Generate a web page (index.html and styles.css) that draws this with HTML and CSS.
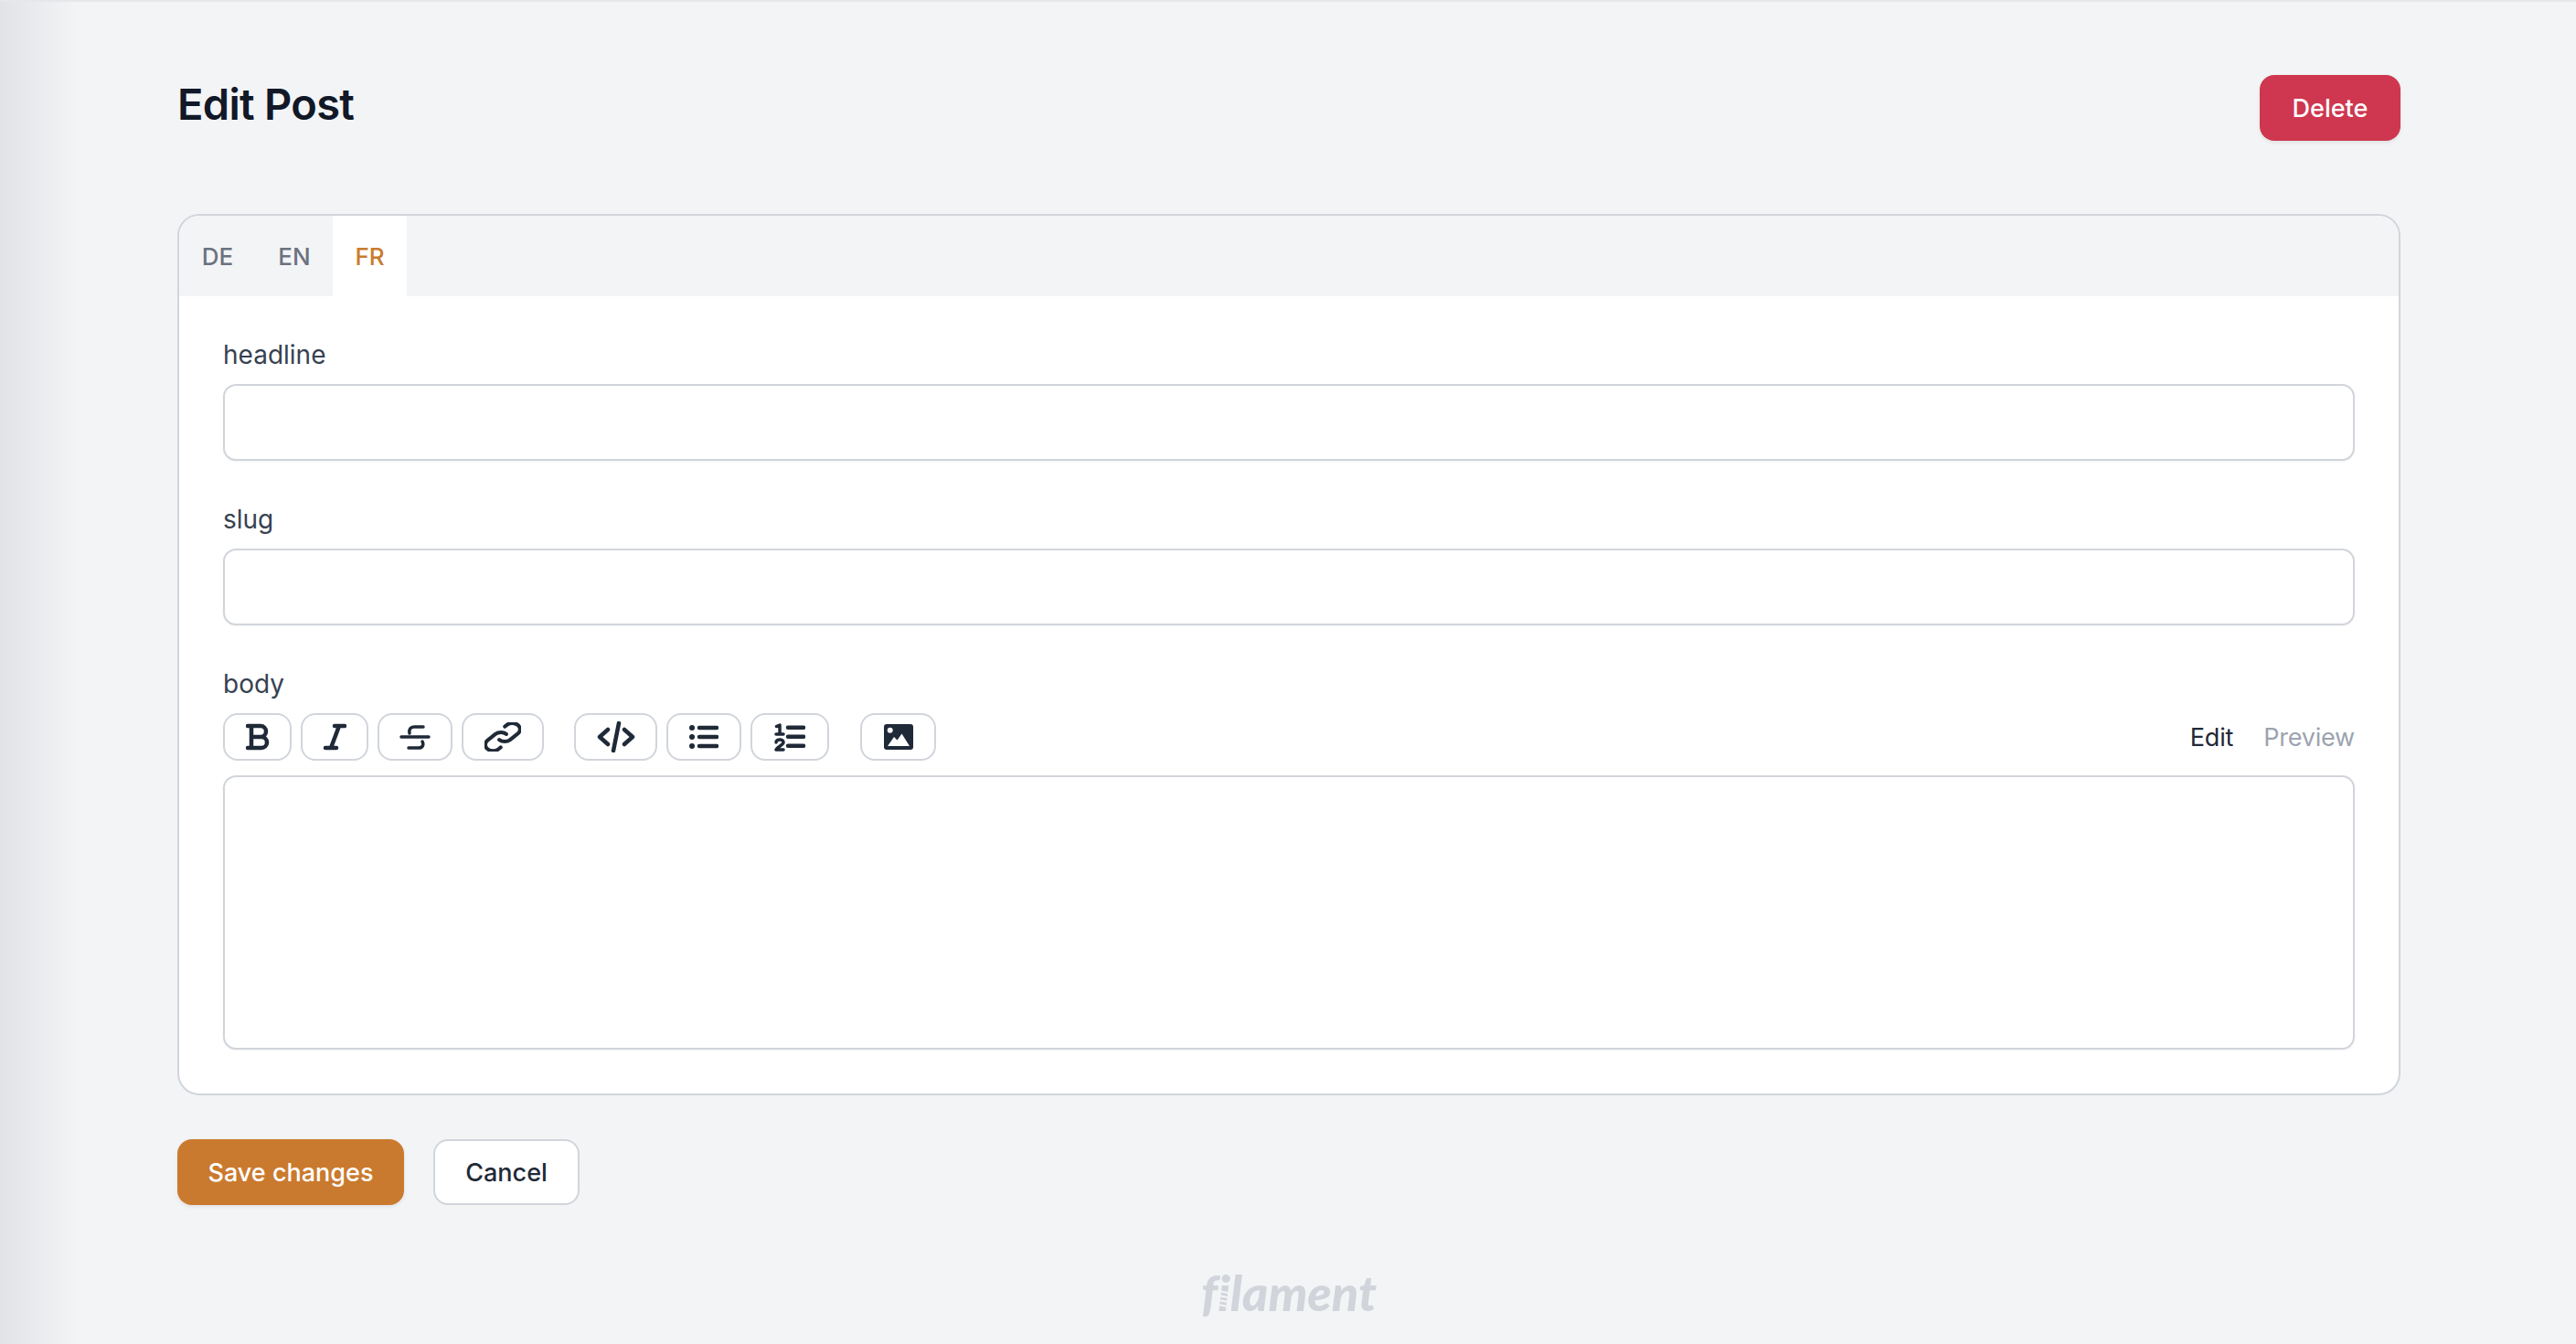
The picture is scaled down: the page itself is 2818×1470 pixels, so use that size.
FILE: index.html
```html
<!DOCTYPE html>
<html lang="en">
<head>
  <meta charset="UTF-8" />
  <title>Edit Post</title>
  <link rel="stylesheet" href="styles.css">
</head>
<body>
  <main class="page">
    <header class="page-header">
      <h1>Edit Post</h1>
      <button class="btn btn-danger">Delete</button>
    </header>

    <form class="card">
      <div class="tabs">
        <span class="tab">DE</span>
        <span class="tab">EN</span>
        <span class="tab active">FR</span>
      </div>

      <div class="fields">
        <div class="field">
          <label class="field-label">headline</label>
          <input type="text" class="text-input" />
        </div>
        <div class="field">
          <label class="field-label">slug</label>
          <input type="text" class="text-input" />
        </div>
        <div class="field">
          <label class="field-label">body</label>
          <div class="toolbar">
            <div class="tool-group">
              <span class="tool tool-b">
                <svg viewBox="0 0 26 30" width="26" height="30"><path d="M2 3h4M2 27h4M6 3v24M6 3h10a6 6 0 0 1 0 12H6M6 15h11a6 6 0 0 1 0 12H6" class="ico"/></svg>
              </span>
              <span class="tool tool-i">
                <svg viewBox="0 0 26 30" width="26" height="30"><path d="M13 3h11M3 27h12M18 3L9 27" class="ico"/></svg>
              </span>
              <span class="tool tool-s">
                <svg viewBox="0 0 34 30" width="34" height="30"><path d="M26 4H16c-4 0-6 3-5 7M2 15h30M25 20c2 4 0 7-4 7H10" class="ico-mid"/></svg>
              </span>
              <span class="tool tool-link">
                <svg viewBox="2.500 2.500 19 19" width="40" height="32" preserveAspectRatio="none"><path d="M13.828 10.172a4 4 0 0 0-5.656 0l-4 4a4 4 0 1 0 5.656 5.656l1.102-1.101m-.758-4.899a4 4 0 0 0 5.656 0l4-4a4 4 0 0 0-5.656-5.656l-1.100 1.100" class="ico-link"/></svg>
              </span>
            </div>
            <div class="tool-group">
              <span class="tool tool-code">
                <svg viewBox="0 0 42 34" width="42" height="34"><path d="M12 9l-9 8 9 8M30 9l9 8-9 8M24 2l-6 30" class="ico"/></svg>
              </span>
              <span class="tool tool-ul">
                <svg viewBox="0 0 32 26" width="32" height="26"><circle cx="3" cy="3" r="3"/><circle cx="3" cy="13" r="3"/><circle cx="3" cy="23" r="3"/><path d="M11 3h19M11 13h19M11 23h19" class="ico"/></svg>
              </span>
              <span class="tool tool-ol">
                <svg viewBox="0 0 34 32" width="34" height="32"><path d="M2.500 4.500L6 3v10M2 13h8M2 22c0-4 8-4 8 0 0 3-6 4-8 8h8" class="ico-mid"/><path d="M15 5.700h17M15 15.700h17M15 25.700h17" class="ico"/></svg>
              </span>
            </div>
            <div class="tool-group">
              <span class="tool tool-img">
                <svg viewBox="0 0 32 28" width="32" height="28"><path fill-rule="evenodd" d="M3 0h26a3 3 0 0 1 3 3v22a3 3 0 0 1-3 3H3a3 3 0 0 1-3-3V3a3 3 0 0 1 3-3zM6.700 3.700a3 3 0 1 0 0 6 3 3 0 0 0 0-6zM19.500 10.500l-5 7-3.500-3.500-7 10h24z"/></svg>
              </span>
            </div>
            <div class="mode-switch">
              <span class="mode active">Edit</span>
              <span class="mode">Preview</span>
            </div>
          </div>
          <textarea class="text-area"></textarea>
        </div>
      </div>
    </form>

    <div class="form-actions">
      <button class="btn btn-primary">Save changes</button>
      <button class="btn btn-light">Cancel</button>
    </div>

    <footer class="brand">
      <span class="brand-name">f<span class="brand-i">i<svg class="spring" viewBox="0 0 14 24" width="14" height="24"><path d="M1 2l10 2M1 7l10 2M1 12l10 2M1 17l10 2"/></svg></span>lament</span>
    </footer>
  </main>
</body>
</html>
```

FILE: styles.css
```css
* {
  box-sizing: border-box;
}

html, body {
  height: 100%;
}

body {
  margin: 0;
  background-color: #f3f4f6;
  color: #111827;
  font-family: "Inter", "Liberation Sans", sans-serif;
  font-size: 28px;
  overflow: hidden;
}

.page {
  height: 1470px;
  padding: 82px 192px 0 194px;
  border-top: 2px solid #e5e7eb;
  background-image: linear-gradient(to right, #e1e3e6 0, #f3f4f6 84px);
  background-repeat: no-repeat;
}

.page-header {
  display: flex;
  align-items: flex-start;
  justify-content: space-between;
  height: 152px;
  margin-top: -2px;
}

h1 {
  margin: 0;
  font-size: 47px;
  font-weight: 600;
  line-height: 64px;
  letter-spacing: -0.7px;
  color: #111827;
}

.btn {
  height: 72px;
  padding: 0;
  border: none;
  border-radius: 16px;
  font-family: inherit;
  font-size: 27px;
  font-weight: 500;
  box-shadow: 0 2px 4px rgba(0,0,0,0.08);
}

.btn-danger {
  width: 154px;
  background-color: #ce374f;
  color: white;
}

.btn-primary {
  width: 248px;
  background-color: #ca7a2e;
  color: white;
}

.btn-light {
  width: 160px;
  background-color: white;
  border: 2px solid #d1d5db;
  color: #1f2937;
  box-shadow: none;
}

.card {
  display: block;
  height: 964px;
  background-color: white;
  border: 2px solid #d1d5db;
  border-radius: 24px;
  overflow: hidden;
}

.tabs {
  display: flex;
  height: 88px;
  background-color: #f3f4f6;
}

.tab {
  display: flex;
  align-items: center;
  justify-content: center;
  width: 84px;
  color: #6b7280;
  font-size: 26px;
  font-weight: 500;
}

.tab.active {
  width: 81px;
  background-color: white;
  color: #ca7a2e;
}

.fields {
  padding: 46px 48px 0 48px;
}

.field {
  margin-bottom: 46px;
}

.field-label {
  display: block;
  height: 40px;
  margin-bottom: 10px;
  color: #374151;
  font-size: 28px;
  line-height: 36px;
}

.text-input {
  display: block;
  width: 100%;
  height: 84px;
  background-color: white;
  border: 2px solid #d1d5db;
  border-radius: 14px;
  box-shadow: 0 1px 2px rgba(0,0,0,0.05);
}

.text-area {
  display: block;
  width: 100%;
  height: 300px;
  background-color: white;
  border: 2px solid #d1d5db;
  border-radius: 14px;
  box-shadow: 0 1px 2px rgba(0,0,0,0.05);
  resize: none;
}

.toolbar {
  display: flex;
  align-items: center;
  height: 52px;
  margin-bottom: 16px;
}

.tool-group {
  display: flex;
  gap: 10px;
  margin-right: 33px;
}

.tool-group:nth-child(2) {
  margin-right: 34px;
}

.tool {
  display: flex;
  align-items: center;
  justify-content: center;
  height: 52px;
  background-color: white;
  border: 2px solid #d1d5db;
  border-radius: 16px;
  color: #1f2937;
}

.tool svg {
  display: block;
  fill: #1f2937;
}

.ico {
  fill: none;
  stroke: #1f2937;
  stroke-width: 4.5;
  stroke-linecap: round;
  stroke-linejoin: round;
}

.ico-mid {
  fill: none;
  stroke: #1f2937;
  stroke-width: 3.5;
  stroke-linecap: round;
  stroke-linejoin: round;
}

.ico-link {
  fill: none;
  stroke: #1f2937;
  stroke-width: 4;
  stroke-linecap: round;
  stroke-linejoin: round;
  vector-effect: non-scaling-stroke;
}

.tool-b { width: 75px; }
.tool-i { width: 74px; }
.tool-s { width: 82px; }
.tool-link { width: 90px; }
.tool-code { width: 91px; }
.tool-ul { width: 82px; }
.tool-ol { width: 86px; }
.tool-img { width: 83px; }

.mode-switch {
  display: flex;
  gap: 33px;
  margin-left: auto;
  font-size: 27px;
  letter-spacing: -0.2px;
}

.mode {
  color: #9ca3af;
}

.mode.active {
  color: #1f2937;
}

.form-actions {
  display: flex;
  gap: 32px;
  margin-top: 48px;
}

.brand {
  display: flex;
  justify-content: center;
  margin-top: 66px;
}

.brand-name {
  color: #d1d5db;
  font-family: "Lato", sans-serif;
  font-size: 54px;
  font-style: italic;
  font-weight: 900;
  font-variant-ligatures: none;
  line-height: 60px;
}

.brand-i {
  position: relative;
}

.spring {
  position: absolute;
  left: 0;
  bottom: 12px;
}

.spring path {
  fill: none;
  stroke: #f3f4f6;
  stroke-width: 2;
}
```
